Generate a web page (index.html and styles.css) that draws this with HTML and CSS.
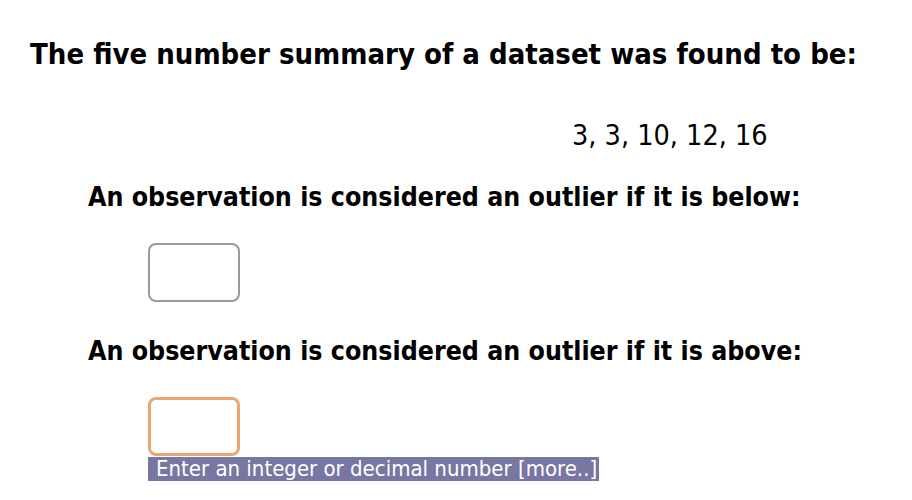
FILE: index.html
```html
<!DOCTYPE html>
<html>
<head>
<meta charset="utf-8">
<link rel="stylesheet" href="styles.css">
</head>
<body>
<div class="page">
  <h1 class="title">The five number summary of a dataset was found to be:</h1>
  <div class="values">3, 3, 10, 12, 16</div>
  <p class="question">An observation is considered an outlier if it is below:</p>
  <div class="answer"><div class="box"></div></div>
  <p class="question q2">An observation is considered an outlier if it is above:</p>
  <div class="answer">
    <div class="box box-active"></div>
    <div class="hint">Enter an integer or decimal number [more..]</div>
  </div>
</div>
</body>
</html>
```

FILE: styles.css
```css
html, body {
  margin: 0;
  padding: 0;
  background: #ffffff;
}
.page {
  font-family: "DejaVu Sans Condensed", "DejaVu Sans", sans-serif;
  color: #000;
  padding-top: 37px;
}
.title {
  margin: 0 0 0 30px;
  font-size: 29px;
  line-height: 34px;
  font-weight: bold;
}
.values {
  margin: 49px 0 0 572px;
  font-size: 28.5px;
  line-height: 32px;
}
.question {
  margin: 30px 0 0 88px;
  font-size: 26.5px;
  line-height: 30px;
  font-weight: bold;
}
.q2 {
  margin-top: 34px;
}
.answer {
  margin: 31px 0 0 148px;
}
.box {
  width: 88px;
  height: 55px;
  border: 2px solid #9a9a9a;
  border-radius: 8px;
}
.box-active {
  width: 86px;
  height: 53px;
  border: 3px solid #eba672;
}
.hint {
  display: inline-block;
  margin-top: 1px;
  padding: 0 2px 0 8px;
  background: #7777a2;
  color: #ffffff;
  font-size: 22px;
  line-height: 24px;
}
```
